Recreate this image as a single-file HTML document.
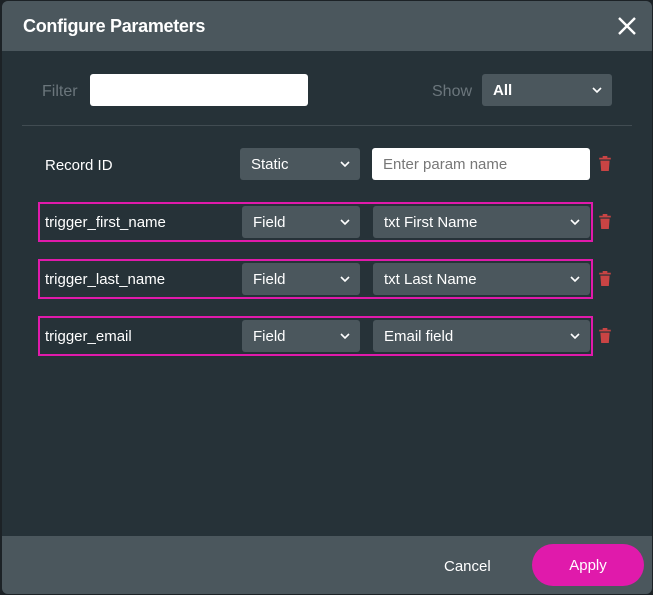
<!DOCTYPE html>
<html><head><meta charset="utf-8"><style>
*{box-sizing:border-box;margin:0;padding:0}
body{width:653px;height:595px;background:#1c2226;font-family:"Liberation Sans",sans-serif;position:relative;overflow:hidden}
.dlg{position:absolute;left:2px;top:1px;width:650px;height:593px;background:#263238;border-radius:6px;overflow:hidden}
.hdr{position:absolute;left:0;top:0;width:100%;height:50px;background:#4b575d}
.hdr h1{position:absolute;left:21px;top:15px;font-size:18px;font-weight:bold;color:#fff;letter-spacing:-0.3px}
.x{position:absolute;right:15px;top:15px}
.ftr{position:absolute;left:0;top:535px;width:100%;height:58px;background:#4b575d}
.abs{position:absolute}
.lbl{color:#6b767c;font-size:16px}
.inp{background:#fff;border-radius:3px}
.sel{background:#4b575d;border-radius:3px;color:#fff;font-size:15px;padding-left:11px;line-height:34px}
.sel svg{position:absolute;right:10px;top:13px}
.txt{color:#fff;font-size:15px}
.pb{border:2px solid #e01aab}
.trash{position:absolute;width:12px;height:15px}
</style></head><body>
<div class="dlg">
<div class="hdr"><h1>Configure Parameters</h1>
<svg class="x" width="20" height="20" viewBox="0 0 20 20"><path d="M2 2L18 18M18 2L2 18" stroke="#fff" stroke-width="2.4"/></svg></div>

<div class="abs lbl" style="left:40px;top:82px">Filter</div>
<div class="abs inp" style="left:88px;top:73px;width:218px;height:32px"></div>
<div class="abs lbl" style="left:430px;top:82px">Show</div>
<div class="abs sel" style="left:480px;top:73px;width:130px;height:32px;font-weight:bold">All<svg width="10" height="7" viewBox="0 0 10 7"><path d="M1 1l4 4 4-4" stroke="#fff" stroke-width="1.6" fill="none"/></svg></div>
<div class="abs" style="left:20px;top:124px;width:610px;height:1px;background:#414c52"></div>

<div class="abs txt" style="left:43px;top:156px">Record ID</div>
<div class="abs sel" style="left:238px;top:147px;width:120px;height:32px">Static<svg width="10" height="7" viewBox="0 0 10 7"><path d="M1 1l4 4 4-4" stroke="#fff" stroke-width="1.6" fill="none"/></svg></div>
<div class="abs inp" style="left:370px;top:147px;width:218px;height:32px;color:#777;font-size:15px;padding-left:11px;line-height:34px">Enter param name</div>
<svg class="trash" style="left:597px;top:155px" viewBox="0 0 10 13"><rect x="0" y="1.5" width="10" height="1.5" fill="#c94444"/><rect x="3" y="0" width="4" height="2" fill="#c94444"/><path d="M1 4h8l-.7 9H1.7z" fill="#c94444"/></svg>

<div class="abs pb" style="left:36px;top:201px;width:555px;height:40px"></div>
<div class="abs txt" style="left:43px;top:213px">trigger_first_name</div>
<div class="abs sel" style="left:240px;top:205px;width:118px;height:32px">Field<svg width="10" height="7" viewBox="0 0 10 7"><path d="M1 1l4 4 4-4" stroke="#fff" stroke-width="1.6" fill="none"/></svg></div>
<div class="abs sel" style="left:371px;top:205px;width:217px;height:32px">txt First Name<svg width="10" height="7" viewBox="0 0 10 7"><path d="M1 1l4 4 4-4" stroke="#fff" stroke-width="1.6" fill="none"/></svg></div>
<svg class="trash" style="left:597px;top:213px" viewBox="0 0 10 13"><rect x="0" y="1.5" width="10" height="1.5" fill="#c94444"/><rect x="3" y="0" width="4" height="2" fill="#c94444"/><path d="M1 4h8l-.7 9H1.7z" fill="#c94444"/></svg>

<div class="abs pb" style="left:36px;top:258px;width:555px;height:40px"></div>
<div class="abs txt" style="left:43px;top:270px">trigger_last_name</div>
<div class="abs sel" style="left:240px;top:262px;width:118px;height:32px">Field<svg width="10" height="7" viewBox="0 0 10 7"><path d="M1 1l4 4 4-4" stroke="#fff" stroke-width="1.6" fill="none"/></svg></div>
<div class="abs sel" style="left:371px;top:262px;width:217px;height:32px">txt Last Name<svg width="10" height="7" viewBox="0 0 10 7"><path d="M1 1l4 4 4-4" stroke="#fff" stroke-width="1.6" fill="none"/></svg></div>
<svg class="trash" style="left:597px;top:270px" viewBox="0 0 10 13"><rect x="0" y="1.5" width="10" height="1.5" fill="#c94444"/><rect x="3" y="0" width="4" height="2" fill="#c94444"/><path d="M1 4h8l-.7 9H1.7z" fill="#c94444"/></svg>

<div class="abs pb" style="left:36px;top:315px;width:555px;height:40px"></div>
<div class="abs txt" style="left:43px;top:327px">trigger_email</div>
<div class="abs sel" style="left:240px;top:319px;width:118px;height:32px">Field<svg width="10" height="7" viewBox="0 0 10 7"><path d="M1 1l4 4 4-4" stroke="#fff" stroke-width="1.6" fill="none"/></svg></div>
<div class="abs sel" style="left:371px;top:319px;width:217px;height:32px">Email field<svg width="10" height="7" viewBox="0 0 10 7"><path d="M1 1l4 4 4-4" stroke="#fff" stroke-width="1.6" fill="none"/></svg></div>
<svg class="trash" style="left:597px;top:327px" viewBox="0 0 10 13"><rect x="0" y="1.5" width="10" height="1.5" fill="#c94444"/><rect x="3" y="0" width="4" height="2" fill="#c94444"/><path d="M1 4h8l-.7 9H1.7z" fill="#c94444"/></svg>

<div class="ftr">
<div class="abs txt" style="left:442px;top:22px">Cancel</div>
<div class="abs" style="left:530px;top:8px;width:112px;height:42px;border-radius:21px;background:#e01aab;color:#fff;font-size:15px;text-align:center;line-height:44px">Apply</div>
</div>
</div>
</body></html>
